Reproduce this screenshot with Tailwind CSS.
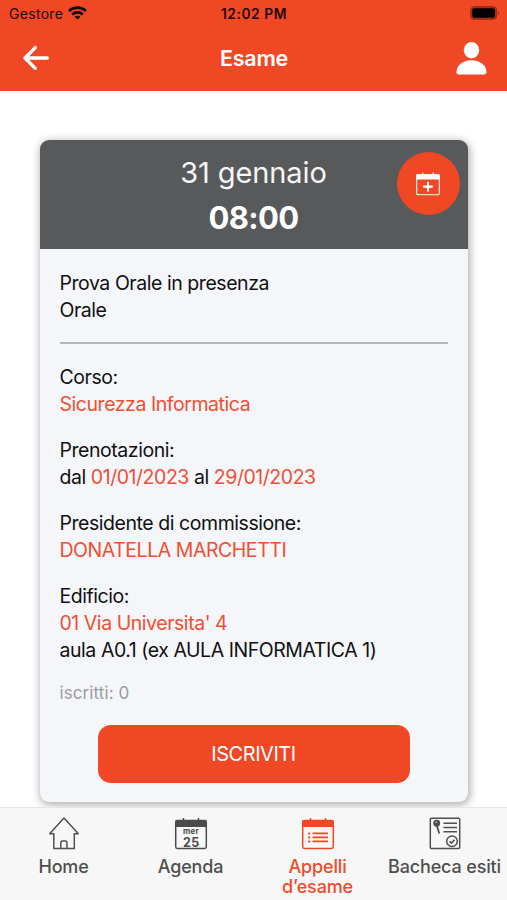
<!DOCTYPE html>
<html lang="it">
<head>
<meta charset="utf-8">
<title>Esame</title>
<script src="https://cdn.jsdelivr.net/npm/@tailwindcss/browser@4"></script>
</head>
<body class="flex h-[900px] w-[507px] flex-col overflow-hidden bg-white font-['Inter',sans-serif]">

<header class="h-[91px] shrink-0 bg-[#f04725] text-white">
  <div class="grid h-[28px] grid-cols-3 items-center pr-[7px] pl-[9px] text-[14px] leading-[28px] text-[#240a05]">
    <div class="flex items-center gap-[5px]">
      <span class="tracking-[0.3px]">Gestore</span>
      <svg class="-mt-[2px] h-[14px] w-[19px]" viewBox="0 0 19 14" fill="none" stroke="#160402" stroke-width="2.7">
        <path d="M1 5C5.8 .5 13.2 .5 18 5"/>
        <path d="M4.2 8.4C7.2 5.6 11.8 5.6 14.8 8.4"/>
        <path d="M9.5 13.6 6.6 10.7C8.2 9.3 10.8 9.3 12.4 10.7Z" fill="#160402" stroke="none"/>
      </svg>
    </div>
    <span class="pr-[1px] text-center text-[13.8px] font-semibold tracking-[0.55px] whitespace-nowrap">12:02 PM</span>
    <svg class="-mt-[2px] h-[14px] w-[30px] justify-self-end" viewBox="0 0 30 14">
      <rect x=".7" y=".7" width="26" height="12.6" rx="3.6" fill="#a82d17" stroke="#9a2813"/>
      <rect x="2.3" y="2.2" width="22.6" height="9.6" rx="2" fill="#000"/>
      <path d="M28 5.2Q30 7 28 8.8Z" fill="#9a2813"/>
    </svg>
  </div>
  <div class="flex h-[61px] items-center justify-between pr-[20px] pl-[23px]">
    <svg class="-mt-[1px] h-[26px] w-[27px]" viewBox="0 0 27 26" fill="none" stroke="#fff" stroke-width="3.3" stroke-linecap="round" stroke-linejoin="round"><path d="M24.3 13H2M12.3 2.6 2 13l10.3 10.3"/></svg>
    <h1 class="pl-[2px] text-[21.5px] font-semibold tracking-[-0.2px]">Esame</h1>
    <svg class="h-[33px] w-[31px]" viewBox="0 0 31 33" fill="#fff"><ellipse cx="15.5" cy="8.3" rx="7.7" ry="8.2"/><path d="M.5 30.2C.5 23 7.4 18.2 15.5 18.2S30.5 23 30.5 30.2Q30.5 32.5 28.2 32.5H2.8Q.5 32.5.5 30.2Z"/></svg>
  </div>
</header>

<main class="min-h-0 flex-1 px-[39.5px] pt-[49px]">
  <article class="h-[662px] w-[428px] overflow-hidden rounded-[9px] bg-[#f4f6fa] shadow-[1px_2px_8px_1px_rgba(0,0,0,0.32)]">
    <div class="relative h-[108.5px] bg-[#58595b] pt-[12px] text-center text-white">
      <p class="text-[29px] leading-[42px] tracking-[-0.1px] text-[#f6f6f6]">31 gennaio</p>
      <p class="pt-[2px] text-[31px] leading-[44px] font-bold tracking-[-0.6px]">08:00</p>
      <button class="absolute top-[12px] right-[8px] flex size-[63px] items-center justify-center rounded-full bg-[#f04725]">
        <svg class="h-[24px] w-[24px]" viewBox="0 0 24 24" fill="none" stroke="#fff">
          <rect x=".7" y="2.8" width="22.6" height="20" rx="1.2" stroke-width="1.1"/>
          <path d="M.3 2.3H23.7V7.6H.3Z" fill="#fff" stroke="none"/>
          <path d="M6.7.6V3M17.3.6V3" stroke-width="1.3"/>
          <path d="M12 9.8V19.4M7.2 14.6H16.8" stroke-width="2.1"/>
        </svg>
      </button>
    </div>
    <div class="px-[20px] pt-[21.3px] text-[19.5px] leading-[26.9px] tracking-[-0.45px] text-[#111]">
      <p>Prova Orale in presenza<br>Orale</p>
      <hr class="mt-[18px] mb-[20.5px] h-[2px] border-0 bg-[#b4b6b9]">
      <div class="flex flex-col gap-[19.2px]">
        <p>Corso:<br><span class="text-[#f04e30]">Sicurezza Informatica</span></p>
        <p>Prenotazioni:<br>dal <span class="text-[#f04e30]">01/01/2023</span> al <span class="text-[#f04e30]">29/01/2023</span></p>
        <p>Presidente di commissione:<br><span class="text-[#f04e30]">DONATELLA MARCHETTI</span></p>
        <p>Edificio:<br><span class="text-[#f04e30]">01 Via Universita' 4</span><br>aula A0.1 (ex AULA INFORMATICA 1)</p>
      </div>
      <p class="mt-[16.5px] text-[17px] tracking-[0.1px] text-[#9b9da0]">iscritti: 0</p>
      <button class="mx-auto mt-[18px] block h-[57.5px] w-[312px] rounded-[13px] bg-[#f04725] text-[20px] tracking-[-0.45px] text-white">ISCRIVITI</button>
    </div>
  </article>
</main>

<nav class="relative grid h-[93px] w-[508px] shrink-0 grid-cols-4 border-t border-[#e6e6e7] bg-[#f7f7f7] pt-[8px] text-center text-[18px] leading-[19.5px] font-medium tracking-[-0.15px] whitespace-nowrap text-[#4f4f50]">
  <a class="flex flex-col items-center gap-[6px]">
    <svg class="h-[35px] w-[32px]" viewBox="0 0 32 35" fill="none" stroke="#505051" stroke-width="1.5" stroke-linejoin="round"><path d="M16 2 1.7 17.8H5.8V32.5H26.3V17.8H30.3Z"/><path d="M12.8 32.3V26.6Q12.8 25 14.4 25H17.3Q18.9 25 18.9 26.6V32.3"/></svg>
    <span>Home</span>
  </a>
  <a class="flex flex-col items-center gap-[6px]">
    <svg class="h-[35px] w-[34px]" viewBox="0 0 34 35" fill="none" stroke="#4b4b4c" stroke-width="1.5">
      <rect x="1.7" y="4.6" width="30.6" height="27.8" rx="1.6"/>
      <path d="M1.5 4.5H32.5V11H1.5Z" fill="#4b4b4c" stroke="none"/>
      <path d="M9.5 2V5M24.5 2V5"/>
      <g fill="#4b4b4c" stroke="none" text-anchor="middle" font-weight="700"><text x="17" y="17.6" font-size="8" letter-spacing=".2">mer</text><text x="17.2" y="31.2" font-size="12.5" letter-spacing=".2">25</text></g>
    </svg>
    <span>Agenda</span>
  </a>
  <a class="flex flex-col items-center gap-[6px] text-[#ee4a2b]">
    <svg class="h-[35px] w-[34px]" viewBox="0 0 34 35" fill="none" stroke="#f04725" stroke-width="1.5">
      <rect x="1.7" y="4.6" width="30.6" height="27.8" rx="1.6"/>
      <path d="M1.5 4.5H32.5V11H1.5Z" fill="#f04725" stroke="none"/>
      <path d="M9.5 2V5M24.5 2V5"/>
      <path d="M11.5 17.4H27M11.5 21.4H27M11.5 25.4H27" stroke-width="1.9"/>
      <path d="M7.2 17.4H9.2M7.2 21.4H9.2M7.2 25.4H9.2" stroke-width="2"/>
    </svg>
    <span>Appelli<br>d’esame</span>
  </a>
  <a class="flex flex-col items-center gap-[6px]">
    <svg class="h-[35px] w-[32px]" viewBox="0 0 32 35" fill="none" stroke="#505051" stroke-width="1.5">
      <rect x="1.3" y="2.2" width="29.4" height="30.3" rx="1"/>
      <circle cx="7.7" cy="7.3" r="2.7" fill="#505051"/><path d="M7.8 9.5 10.3 17.5" stroke-width="1.8"/><circle cx="7.2" cy="6.2" r=".8" fill="#ddd" stroke="none"/>
      <path d="M14.5 7.3H28M14.5 11.5H28M14.5 15.7H28" stroke-width="1.6"/>
      <circle cx="23" cy="25.3" r="5.3" stroke-width="1.5"/><path d="M20.7 25.3 22.5 27 25.5 23.7" stroke-width="1.7"/>
    </svg>
    <span>Bacheca esiti</span>
  </a>
</nav>
</body>
</html>
